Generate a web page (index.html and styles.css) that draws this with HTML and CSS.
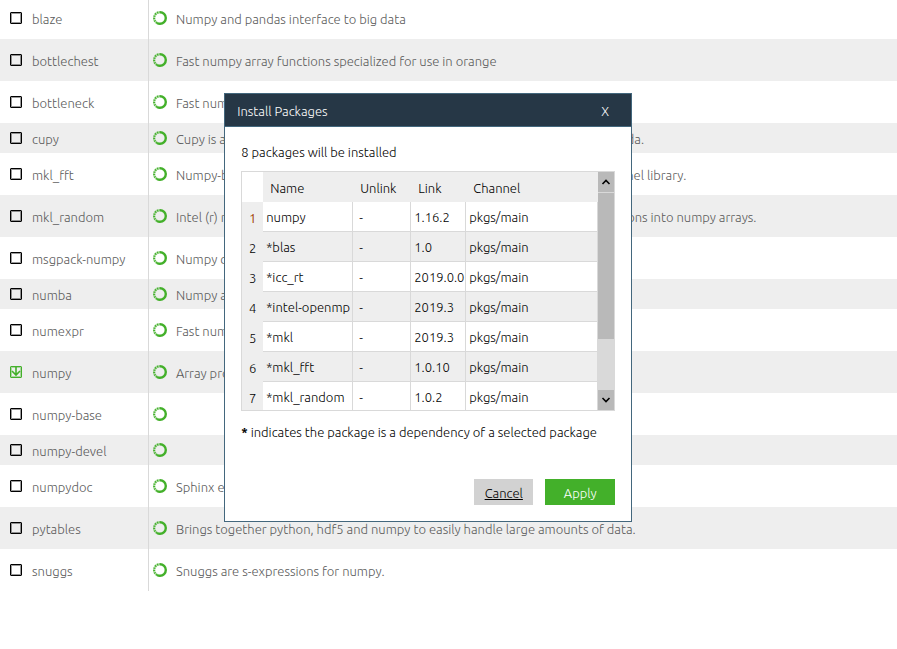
FILE: index.html
```
<!DOCTYPE html>
<html lang="en">
<head>
    <meta charset="utf-8" />
    <title>Install Packages</title>
    <link rel="stylesheet" href="styles.css">
</head>
<body>
    <svg class="defs" width="0" height="0">
        <symbol id="ring" viewBox="0 0 14 14">
            <path d="M7 1.2a5.8 5.8 0 0 1 0 11.6a5.8 5.8 0 0 1-3-.8" fill="none" stroke="#43b02a" stroke-width="2.4"/>
            <path d="M4 12A5.8 5.8 0 0 1 7 1.2" fill="none" stroke="#43b02a" stroke-width="2.4" opacity=".35"/>
            <path d="M4 12A5.8 5.8 0 0 1 7 1.2" fill="none" stroke="#43b02a" stroke-width="2" stroke-dasharray="1.2 1.2"/>
        </symbol>
    </svg>

    <table class="packages">
        <tbody>
            <tr><td class="name"><div class="cell"><input type="checkbox" id="p1"><label for="p1">blaze</label></div></td><td><div class="cell"><svg class="ring"><use href="#ring"/></svg><span>Numpy and pandas interface to big data</span></div></td></tr>
            <tr><td class="name"><div class="cell"><input type="checkbox" id="p2"><label for="p2">bottlechest</label></div></td><td><div class="cell"><svg class="ring"><use href="#ring"/></svg><span>Fast numpy array functions specialized for use in orange</span></div></td></tr>
            <tr><td class="name"><div class="cell"><input type="checkbox" id="p3"><label for="p3">bottleneck</label></div></td><td><div class="cell"><svg class="ring"><use href="#ring"/></svg><span>Fast numpy array functions written in cython.</span></div></td></tr>
            <tr class="short"><td class="name"><div class="cell"><input type="checkbox" id="p4"><label for="p4">cupy</label></div></td><td><div class="cell"><svg class="ring"><use href="#ring"/></svg><span>Cupy is an implementation of numpy-compatible multi-dimensional array on cuda.</span></div></td></tr>
            <tr><td class="name"><div class="cell"><input type="checkbox" id="p5"><label for="p5">mkl_fft</label></div></td><td><div class="cell"><svg class="ring"><use href="#ring"/></svg><span>Numpy-based implementation of fast fourier transform using intel (r) math kernel library.</span></div></td></tr>
            <tr><td class="name"><div class="cell"><input type="checkbox" id="p6"><label for="p6">mkl_random</label></div></td><td><div class="cell"><svg class="ring"><use href="#ring"/></svg><span>Intel (r) mkl-powered package for sampling from common probability distributions into numpy arrays.</span></div></td></tr>
            <tr><td class="name"><div class="cell"><input type="checkbox" id="p7"><label for="p7">msgpack-numpy</label></div></td><td><div class="cell"><svg class="ring"><use href="#ring"/></svg><span>Numpy data serialization using msgpack</span></div></td></tr>
            <tr class="short"><td class="name"><div class="cell"><input type="checkbox" id="p8"><label for="p8">numba</label></div></td><td><div class="cell"><svg class="ring"><use href="#ring"/></svg><span>Numpy aware dynamic python compiler using llvm</span></div></td></tr>
            <tr><td class="name"><div class="cell"><input type="checkbox" id="p9"><label for="p9">numexpr</label></div></td><td><div class="cell"><svg class="ring"><use href="#ring"/></svg><span>Fast numerical expression evaluator for numpy.</span></div></td></tr>
            <tr><td class="name"><div class="cell"><span class="marked"><input type="checkbox" id="p10" checked><svg viewBox="0 0 12 12"><path d="M6 1v8M2 5l4 4 4-4" fill="none" stroke="#43b02a" stroke-width="1.6"/></svg></span><label for="p10">numpy</label></div></td><td><div class="cell"><svg class="ring"><use href="#ring"/></svg><span>Array processing for numbers, strings, records, and objects.</span></div></td></tr>
            <tr><td class="name"><div class="cell"><input type="checkbox" id="p11"><label for="p11">numpy-base</label></div></td><td><div class="cell"><svg class="ring"><use href="#ring"/></svg></div></td></tr>
            <tr class="short"><td class="name"><div class="cell"><input type="checkbox" id="p12"><label for="p12">numpy-devel</label></div></td><td><div class="cell"><svg class="ring"><use href="#ring"/></svg></div></td></tr>
            <tr><td class="name"><div class="cell"><input type="checkbox" id="p13"><label for="p13">numpydoc</label></div></td><td><div class="cell"><svg class="ring"><use href="#ring"/></svg><span>Sphinx extension to support docstrings in numpy format</span></div></td></tr>
            <tr><td class="name"><div class="cell"><input type="checkbox" id="p14"><label for="p14">pytables</label></div></td><td><div class="cell"><svg class="ring"><use href="#ring"/></svg><span>Brings together python, hdf5 and numpy to easily handle large amounts of data.</span></div></td></tr>
            <tr><td class="name"><div class="cell"><input type="checkbox" id="p15"><label for="p15">snuggs</label></div></td><td><div class="cell"><svg class="ring"><use href="#ring"/></svg><span>Snuggs are s-expressions for numpy.</span></div></td></tr>
        </tbody>
    </table>

    <div class="dialog" role="dialog" aria-labelledby="title">
        <div class="titlebar">
            <span id="title">Install Packages</span>
            <button type="button" class="close">X</button>
        </div>
        <div class="content">
            <p>8 packages will be installed</p>
            <div class="list">
                <div class="view">
                    <table class="installs">
                        <colgroup><col class="c-num"><col class="c-name"><col class="c-unlink"><col class="c-link"><col></colgroup>
                        <thead>
                            <tr><td></td><th>Name</th><th>Unlink</th><th>Link</th><th>Channel</th></tr>
                        </thead>
                        <tbody>
                            <tr><th class="current">1</th><td>numpy</td><td class="unlink">-</td><td>1.16.2</td><td>pkgs/main</td></tr>
                            <tr><th>2</th><td>*blas</td><td class="unlink">-</td><td>1.0</td><td>pkgs/main</td></tr>
                            <tr><th>3</th><td>*icc_rt</td><td class="unlink">-</td><td>2019.0.0</td><td>pkgs/main</td></tr>
                            <tr><th>4</th><td>*intel-openmp</td><td class="unlink">-</td><td>2019.3</td><td>pkgs/main</td></tr>
                            <tr><th>5</th><td>*mkl</td><td class="unlink">-</td><td>2019.3</td><td>pkgs/main</td></tr>
                            <tr><th>6</th><td>*mkl_fft</td><td class="unlink">-</td><td>1.0.10</td><td>pkgs/main</td></tr>
                            <tr><th>7</th><td>*mkl_random</td><td class="unlink">-</td><td>1.0.2</td><td>pkgs/main</td></tr>
                        </tbody>
                    </table>
                </div>
                <div class="scrollbar">
                    <button type="button" aria-label="Scroll up"><svg viewBox="0 0 10 6"><path d="M1.5 5L5 1.5 8.5 5" fill="none" stroke="#000" stroke-width="1.6"/></svg></button>
                    <div class="thumb"></div>
                    <div class="track"></div>
                    <button type="button" aria-label="Scroll down"><svg viewBox="0 0 10 6"><path d="M1.5 1L5 4.5 8.5 1" fill="none" stroke="#000" stroke-width="1.6"/></svg></button>
                </div>
            </div>
            <p><b>*</b> indicates the package is a dependency of a selected package</p>
            <div class="buttons">
                <button type="button" class="btn">Cancel</button>
                <button type="button" class="btn apply">Apply</button>
            </div>
        </div>
    </div>
</body>
</html>
```
FILE: styles.css
```
*{
    box-sizing:border-box;
    padding:0;
    margin:0;
}
body{
    background:#fff;
    color:#000;
    font-family:Ubuntu, "Noto Sans", "Open Sans", sans-serif;
    font-size:13px;
    font-weight:300;
    line-height:18px;
    overflow:hidden;
}
button{
    border:0;
    font:inherit;
    cursor:pointer;
}
b{
    font-weight:700;
}
table{
    width:100%;
    border-collapse:separate;
    border-spacing:0;
}
.defs{
    position:absolute;
}

/* package list, scrolled a little past its first row */
.packages{
    margin-top:-3px;
    color:#5a5a5a;
}
.packages tr{
    height:42px;
}
.packages .short{
    height:30px;
}
.packages tr:nth-child(even){
    background:#eee;
}
.packages td{
    padding-left:4px;
    vertical-align:middle;
}
.packages .name{
    width:149px;
    padding-left:10px;
    border-right:1px solid #d9d9d9;
}
.cell{
    display:flex;
    align-items:center;
    gap:9px;
    white-space:nowrap;
}
.name .cell{
    gap:10px;
}
.cell label, .cell span{
    padding-top:1px;
}
.ring{
    width:14px;
    height:14px;
}
.cell input{
    appearance:none;
    display:block;
    width:12px;
    height:12px;
    border:1px solid #000;
    border-radius:1px;
    box-shadow:inset 0 0 0 1px rgba(0,0,0,0.4);
}
.cell .marked{
    position:relative;
    padding:0;
}
.marked input{
    border-color:#43b02a;
    box-shadow:inset 0 0 0 1px rgba(67,176,42,0.4);
}
.marked svg{
    position:absolute;
    top:0;
    left:0;
    width:12px;
    height:12px;
    pointer-events:none;
}

.dialog{
    position:absolute;
    top:93px;
    left:25%;
    width:408px;
    background:#fff;
    border:1px solid #43677d;
}
.titlebar{
    display:flex;
    justify-content:space-between;
    align-items:center;
    height:33px;
    padding:1px 20px 0 12px;
    background:#263746;
    border-bottom:1px solid #43677d;
    color:#fff;
}
.close{
    width:12px;
    background:none;
    color:#fff;
}
.content{
    padding:16px;
}
.list{
    display:flex;
    height:240px;
    margin:10px 0 12px;
    border:1px solid #d9d9d9;
}
.view{
    flex:1;
    overflow:hidden;
}
.installs{
    table-layout:fixed;
}
.c-num{
    width:21px;
}
.c-name{
    width:90px;
}
.c-unlink{
    width:58px;
}
.c-link{
    width:55px;
}
.installs tr{
    height:30px;
}
.installs th{
    font-weight:300;
}
.installs thead th{
    padding:2px 0 0 7px;
    background:#eee;
    text-align:left;
}
.installs tbody th{
    padding-top:2px;
    background:#eee;
}
.installs .current{
    color:#a03c00;
    font-weight:400;
}
.installs tbody td{
    padding-left:3px;
    border-right:1px solid #d9d9d9;
    border-bottom:1px solid #d9d9d9;
    white-space:nowrap;
}
.installs tbody .unlink{
    padding-left:6px;
}
.installs tbody tr:nth-child(even){
    background:#eee;
}
.scrollbar{
    display:flex;
    flex-direction:column;
    width:16px;
    background:#d9d9d9;
}
.scrollbar button{
    display:flex;
    justify-content:center;
    align-items:center;
    height:20px;
    background:#b9b9b9;
}
.scrollbar svg{
    width:10px;
    height:6px;
}
.thumb{
    flex:146;
    margin-top:1px;
    background:#b9b9b9;
}
.track{
    flex:51;
}
.buttons{
    display:flex;
    justify-content:flex-end;
    gap:12px;
    margin-top:38px;
}
.btn{
    min-width:59px;
    height:26px;
    padding:1px 10px 0;
    background:#d2d2d2;
    text-decoration:underline;
}
.apply{
    min-width:70px;
    background:#43b02a;
    color:#fff;
    text-decoration:none;
}
```
